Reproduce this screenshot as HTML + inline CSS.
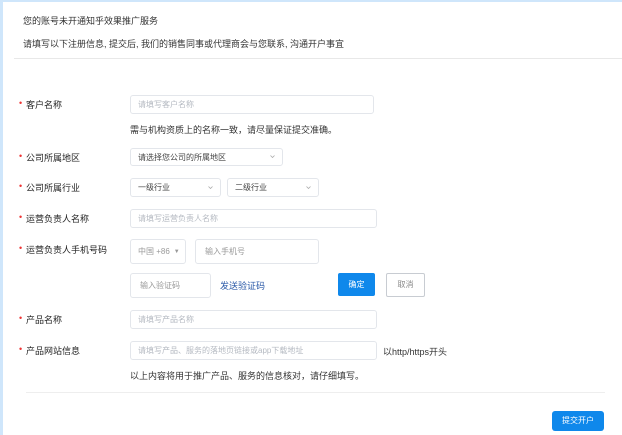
<html><head><style>
body{margin:0;width:622px;height:435px;background:#fff;font-family:"Liberation Sans","Noto Sans CJK SC",sans-serif;position:relative;overflow:hidden;color:#333}
.a{position:absolute;white-space:nowrap}
.t{font-size:9px}
.lbl{font-size:9px;color:#222}
.lbl:before{content:"•";color:#e33;position:absolute;left:-7px;top:0}
.in{position:absolute;box-sizing:border-box;border:1px solid #e3e6eb;border-radius:3px;font-size:8px;color:#b5bac2;padding-left:7px;display:flex;align-items:center}
.ar svg{position:absolute;right:7px;top:50%;margin-top:-2px}
</style></head><body>
<div class="a" style="left:0;top:0;width:3px;height:435px;background:#cfe6fb"></div>
<div class="a" style="left:0;top:0;width:622px;height:2px;background:#cfe6fb"></div>
<div class="a t" style="left:23px;top:14px">您的账号未开通知乎效果推广服务</div>
<div class="a t" style="left:23px;top:37px">请填写以下注册信息, 提交后, 我们的销售同事或代理商会与您联系, 沟通开户事宜</div>
<div class="a" style="left:14px;top:58px;width:608px;height:1px;background:#e8e8e8"></div>

<div class="a lbl" style="left:26px;top:98px">客户名称</div>
<div class="in" style="left:130px;top:95px;width:244px;height:19px">请填写客户名称</div>
<div class="a t" style="left:130px;top:123px">需与机构资质上的名称一致，请尽量保证提交准确。</div>

<div class="a lbl" style="left:26px;top:151px">公司所属地区</div>
<div class="in ar" style="left:130px;top:148px;width:153px;height:18px;color:#444">请选择您公司的所属地区<svg width="5" height="3"><path d="M0.5 0.5L2.5 2.5L4.5 0.5" stroke="#aaa" fill="none" stroke-width="0.8"/></svg></div>

<div class="a lbl" style="left:26px;top:181px">公司所属行业</div>
<div class="in ar" style="left:130px;top:178px;width:91px;height:19px;color:#444">一级行业<svg width="5" height="3"><path d="M0.5 0.5L2.5 2.5L4.5 0.5" stroke="#aaa" fill="none" stroke-width="0.8"/></svg></div>
<div class="in ar" style="left:227px;top:178px;width:92px;height:19px;color:#444">二级行业<svg width="5" height="3"><path d="M0.5 0.5L2.5 2.5L4.5 0.5" stroke="#aaa" fill="none" stroke-width="0.8"/></svg></div>

<div class="a lbl" style="left:26px;top:212px">运营负责人名称</div>
<div class="in" style="left:130px;top:209px;width:247px;height:19px">请填写运营负责人名称</div>

<div class="a lbl" style="left:26px;top:243px">运营负责人手机号码</div>
<div class="in" style="left:130px;top:239px;width:56px;height:25px;color:#999">中国 +86 <span style="font-size:6px;margin-left:4px">▼</span></div>
<div class="in" style="left:195px;top:239px;width:124px;height:25px;color:#999;padding-left:9px">输入手机号</div>

<div class="in" style="left:130px;top:273px;width:81px;height:25px;color:#999;padding-left:9px">输入验证码</div>
<div class="a" style="left:220px;top:279px;font-size:9px;color:#2b5aa8">发送验证码</div>
<div class="a" style="left:338px;top:273px;width:37px;height:23px;background:#0f88eb;border-radius:2px;color:#fff;font-size:8px;text-align:center;line-height:23px">确定</div>
<div class="a" style="left:386px;top:273px;width:39px;height:24px;box-sizing:border-box;border:1px solid #c8ccd2;border-radius:2px;color:#888;font-size:8px;text-align:center;line-height:22px">取消</div>

<div class="a lbl" style="left:26px;top:313px">产品名称</div>
<div class="in" style="left:130px;top:310px;width:247px;height:19px">请填写产品名称</div>

<div class="a lbl" style="left:26px;top:344px">产品网站信息</div>
<div class="in" style="left:130px;top:341px;width:247px;height:19px">请填写产品、服务的落地页链接或app下载地址</div>
<div class="a t" style="left:383px;top:345px">以http/https开头</div>
<div class="a t" style="left:130px;top:369px">以上内容将用于推广产品、服务的信息核对，请仔细填写。</div>

<div class="a" style="left:26px;top:392px;width:579px;height:1px;background:#eee"></div>
<div class="a" style="left:552px;top:411px;width:52px;height:20px;background:#0f88eb;border-radius:3px;color:#fff;font-size:8px;text-align:center;line-height:20px">提交开户</div>
</body></html>
